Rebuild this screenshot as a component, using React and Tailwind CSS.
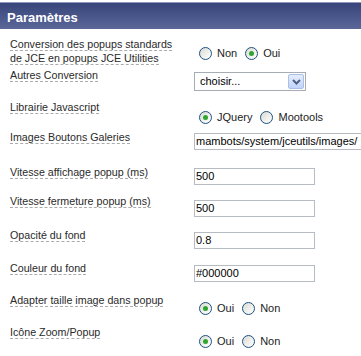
import React from "react";

const font = { fontFamily: "'Liberation Sans', Arial, sans-serif" };

const Radio = ({ checked }) => (
  <span className="inline-flex h-[13px] w-[13px] items-center justify-center rounded-full border border-[#1c5180] bg-gradient-to-br from-[#dcdcd4] to-white">
    {checked && <span className="h-[5px] w-[5px] rounded-full bg-[#2fa52f]" />}
  </span>
);

const RadioPair = ({ items }) => (
  <div className="ml-[5px] flex items-center text-[11px] text-[#222]">
    {items.map((it, i) => (
      <label key={i} className="mr-[8px] flex items-center gap-[5px]">
        <Radio checked={it.checked} />
        <span>{it.label}</span>
      </label>
    ))}
  </div>
);

const TextBox = ({ value, wide }) => (
  <div
    className={
      "flex h-[17px] items-center border border-[#b7bcc4] bg-white pl-[1px] text-[11px] text-black " +
      (wide ? "w-[172px]" : "w-[121px]")
    }
  >
    {value}
  </div>
);

const Select = () => (
  <div className="flex h-[19px] w-[112px] items-center justify-between border border-[#a5acb2] bg-white pl-[5px] pr-[1px] text-[11px] text-black">
    <span>choisir...</span>
    <span className="flex h-[15px] w-[16px] items-center justify-center rounded-[2px] border border-[#a9bfe6] bg-gradient-to-b from-[#e6eefc] to-[#c1d3fb]">
      <svg width="9" height="6" viewBox="0 0 9 6">
        <path d="M1 1 L4.5 4.5 L8 1" stroke="#4d6185" strokeWidth="2" fill="none" />
      </svg>
    </span>
  </div>
);

const rows = [
  {
    label: "Conversion des popups standards de JCE en popups JCE Utilities",
    h: 32,
    pt: 14,
    lh: 14,
    ctrl: <RadioPair items={[{ label: "Non" }, { label: "Oui", checked: true }]} />,
  },
  { label: "Autres Conversion", h: 32, pt: 9, ctrl: <Select /> },
  {
    label: "Librairie Javascript",
    h: 30,
    pt: 14,
    ctrl: <RadioPair items={[{ label: "JQuery", checked: true }, { label: "Mootools" }]} />,
  },
  { label: "Images Boutons Galeries", h: 35, pt: 8, ctrl: <TextBox value="mambots/system/jceutils/images/" wide /> },
  { label: "Vitesse affichage popup (ms)", h: 29, pt: 8, ctrl: <TextBox value="500" /> },
  { label: "Vitesse fermeture popup (ms)", h: 34, pt: 11, ctrl: <TextBox value="500" /> },
  { label: "Opacité du fond", h: 33, pt: 9, ctrl: <TextBox value="0.8" /> },
  { label: "Couleur du fond", h: 32, pt: 9, ctrl: <TextBox value="#000000" /> },
  {
    label: "Adapter taille image dans popup",
    h: 32,
    pt: 12,
    ctrl: <RadioPair items={[{ label: "Oui", checked: true }, { label: "Non" }]} />,
  },
  {
    label: "Icône Zoom/Popup",
    h: 35,
    pt: 13,
    ctrl: <RadioPair items={[{ label: "Oui", checked: true }, { label: "Non" }]} />,
  },
];

export default function App() {
  return (
    <div className="h-[356px] w-[361px] overflow-hidden bg-white" style={font}>
      <div className="mt-[2px] h-[27px] border-t border-[#8e97bb] bg-gradient-to-b from-[#38457a] to-[#5b6799] pl-[7px] pt-[5px] text-[13px] font-bold text-white">
        Paramètres
      </div>
      <div className="mt-[2px]">
        {rows.map((r, i) => (
          <div key={i} className="flex items-start" style={{ height: r.h }}>
            <div
              className="w-[194px] shrink-0 pl-[10px] pr-[8px] pt-[6px] text-[10.7px] text-[#2a2a2a]"
              style={{ lineHeight: (r.lh || 13) + "px" }}
            >
              <span className="border-b border-dashed border-[#ababab]">{r.label}</span>
            </div>
            <div className="whitespace-nowrap" style={{ paddingTop: r.pt }}>
              {r.ctrl}
            </div>
          </div>
        ))}
      </div>
    </div>
  );
}
